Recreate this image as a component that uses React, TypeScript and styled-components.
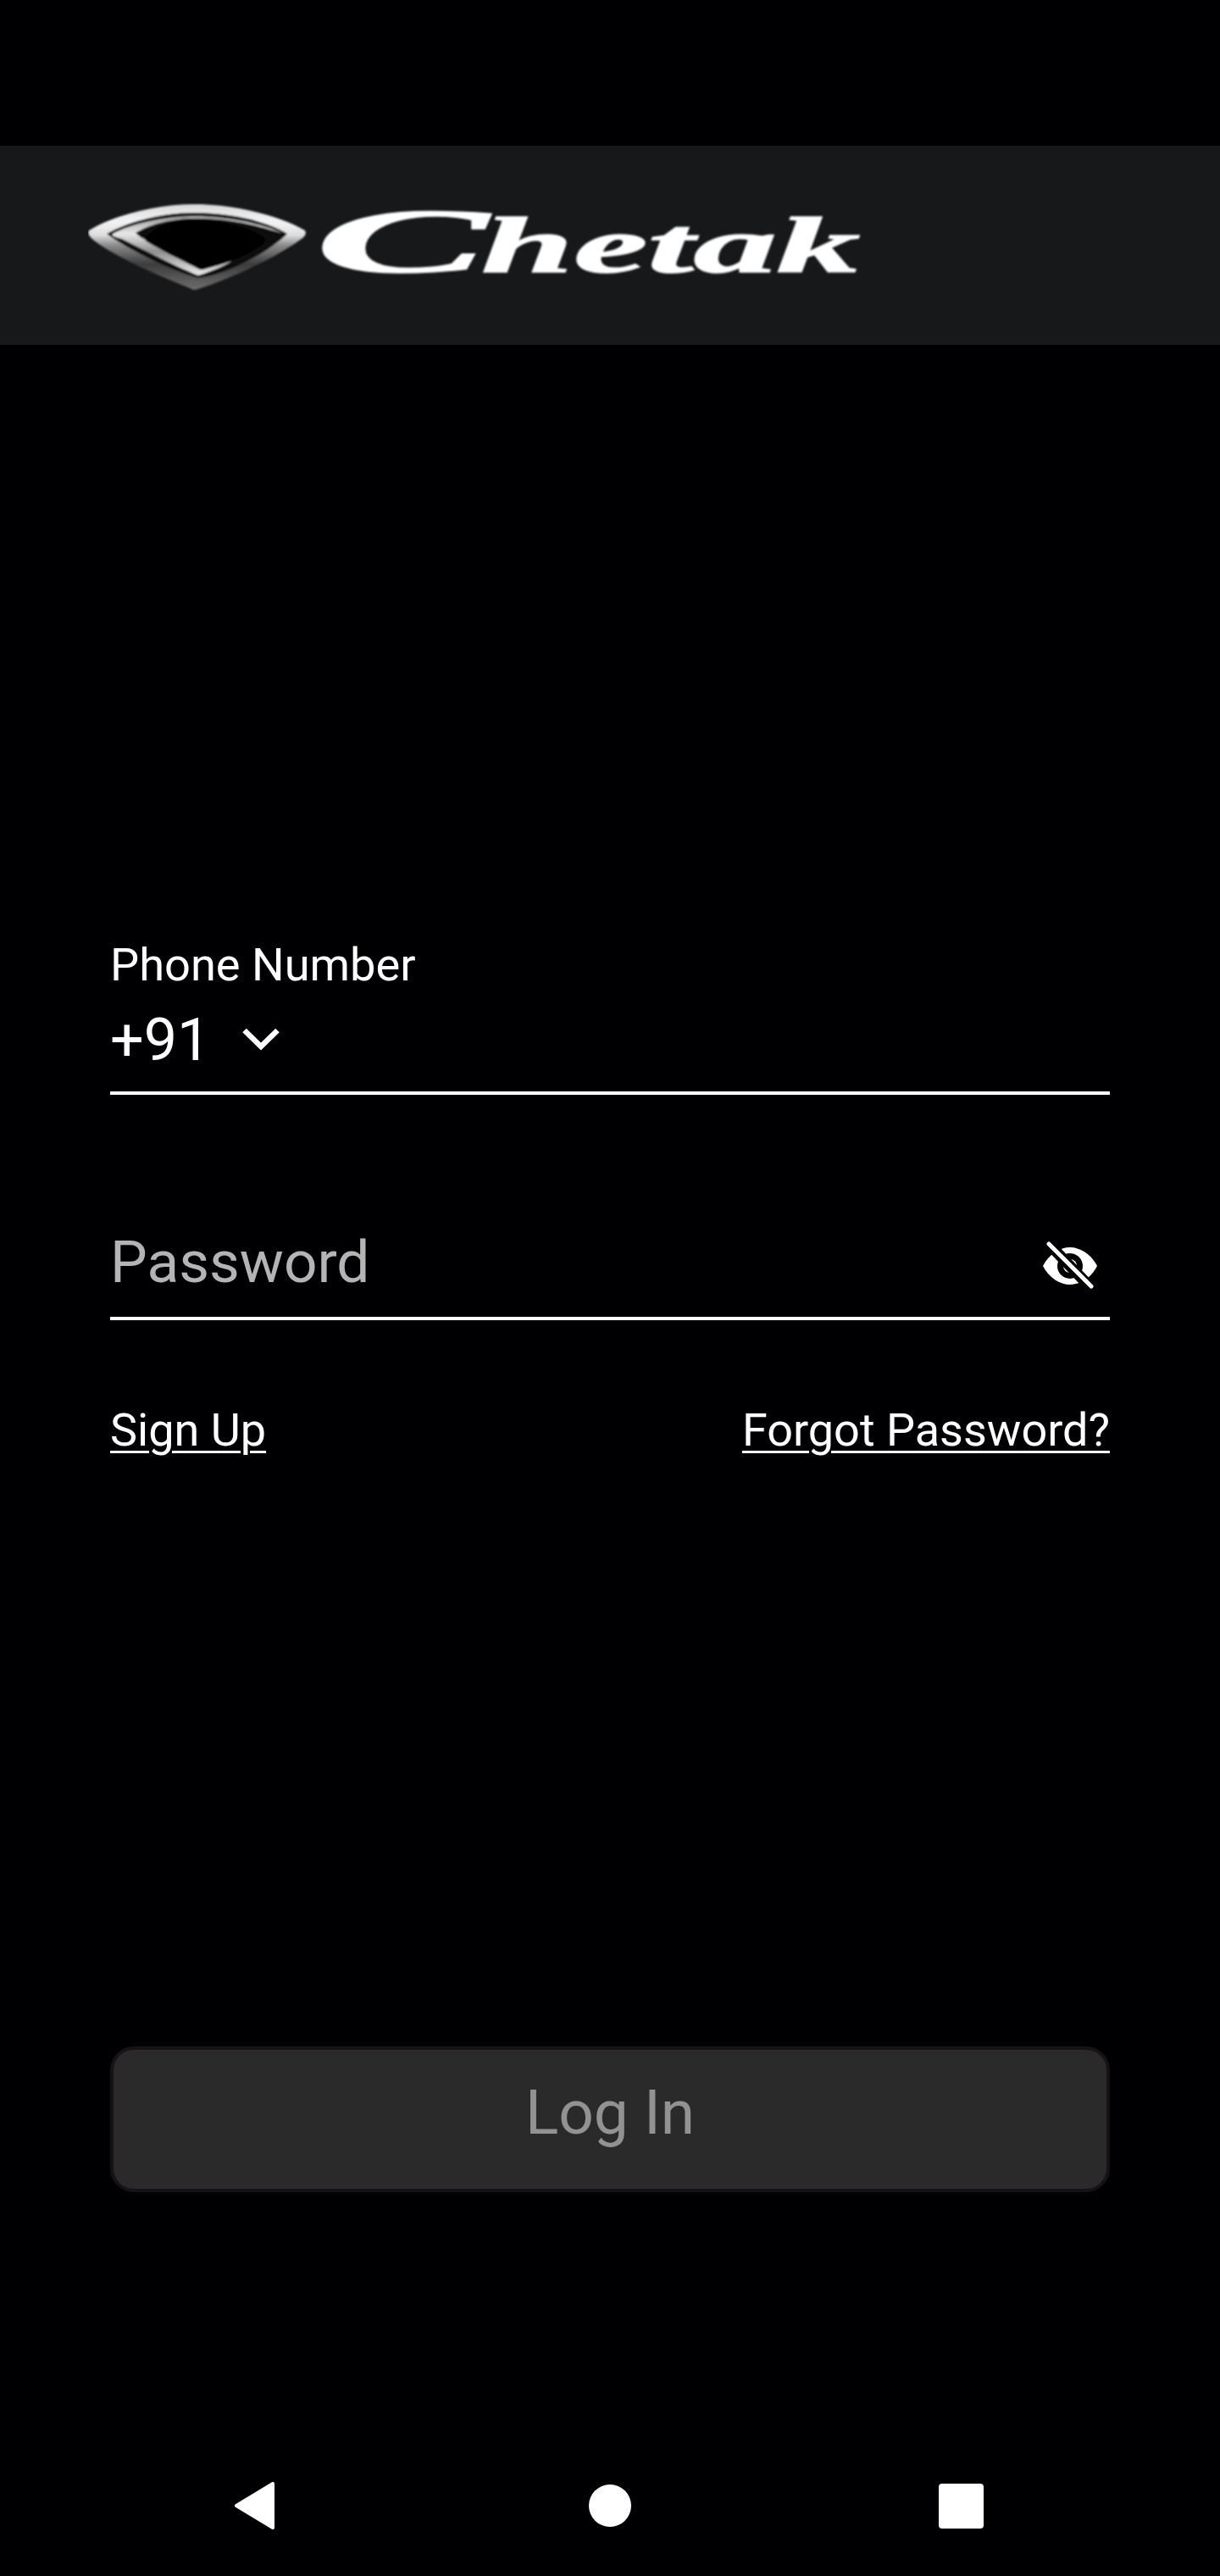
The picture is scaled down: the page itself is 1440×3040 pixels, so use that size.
import React from 'react';
import styled, { createGlobalStyle } from 'styled-components';

const Global = createGlobalStyle`
  html, body { margin: 0; padding: 0; background: #000002; }
  * { box-sizing: border-box; }
`;

const Page = styled.div`
  width: 1440px;
  height: 3040px;
  display: flex;
  flex-direction: column;
  background: #000002;
  color: #fff;
  font-family: Roboto, "Liberation Sans", sans-serif;
  overflow: hidden;
`;

const StatusSpace = styled.div`
  height: 172px;
  flex: none;
`;

const Header = styled.header`
  height: 235px;
  flex: none;
  background: #17181a;
  display: flex;
  align-items: flex-start;
  padding: 48px 0 0 104px;
`;

const Main = styled.main`
  flex: 1;
  display: flex;
  flex-direction: column;
  padding: 0 130px;
`;

const PhoneField = styled.div`
  margin-top: 700px;
  height: 185px;
  border-bottom: 4px solid #fff;
  display: flex;
  flex-direction: column;
`;

const FieldLabel = styled.label`
  font-size: 54.2px;
  line-height: 64px;
  height: 64px;
`;

const PhoneRow = styled.div`
  display: flex;
  align-items: center;
  gap: 38px;
  margin-top: 16px;
`;

const Code = styled.span`
  font-size: 70px;
  line-height: 80px;
`;

const PasswordField = styled.div`
  margin-top: 126px;
  height: 140px;
  border-bottom: 4px solid #fff;
  display: flex;
  align-items: flex-start;
  justify-content: space-between;
  padding: 32px 7px 0 0;
`;

const Placeholder = styled.span`
  font-size: 69.4px;
  line-height: 80px;
  color: #b4b4b4;
`;

const EyeSlot = styled.span`
  display: block;
  margin-top: 13px;
`;

const LinkRow = styled.div`
  margin-top: 98px;
  display: flex;
  justify-content: space-between;
`;

const TextLink = styled.a`
  font-size: 54px;
  line-height: 64px;
  color: #fff;
  text-decoration: underline;
  text-decoration-thickness: 3px;
  text-underline-offset: 6px;
`;

const LoginButton = styled.button`
  margin-top: 695px;
  height: 172px;
  width: 100%;
  background: #2a2a2a;
  border: 4px solid #171215;
  border-radius: 28px;
  color: #929292;
  font-family: inherit;
  font-size: 73px;
  padding: 0 0 16px;
`;

const NavBar = styled.nav`
  height: 172px;
  flex: none;
  display: grid;
  grid-template-columns: 418px 413px 53px;
  align-items: center;
  padding: 60px 0 54px 277px;
`;

const NavIcon = styled.svg`
  display: block;
  flex: none;
`;

const Logo = () => (
  <svg width="920" height="150" viewBox="0 -20 920 150" aria-label="Chetak">
    <defs>
      <linearGradient id="shell" x1="0" y1="0" x2="0" y2="1">
        <stop offset="0" stopColor="#d8d8d8" />
        <stop offset="0.2" stopColor="#f4f4f4" />
        <stop offset="0.36" stopColor="#dedede" />
        <stop offset="0.48" stopColor="#8a8a8a" />
        <stop offset="0.7" stopColor="#3c3c3c" />
        <stop offset="1" stopColor="#6e6e6e" />
      </linearGradient>
      <linearGradient id="inner" x1="0" y1="0" x2="0" y2="1">
        <stop offset="0" stopColor="#9a9a9a" />
        <stop offset="0.3" stopColor="#e8e8e8" />
        <stop offset="0.6" stopColor="#8f8f8f" />
        <stop offset="1" stopColor="#ededed" />
      </linearGradient>
      <filter id="soft" x="-5%" y="-5%" width="110%" height="110%">
        <feGaussianBlur stdDeviation="1.1" />
      </filter>
    </defs>
    <g filter="url(#soft)">
      <path d="M1 32C30 14 80 1 126 1C172 1 225 14 256 32C258 35 256 39 253 41C220 66 160 92 130 101C126 103 123 102 120 100C90 88 32 64 6 43C1 39 -1 35 1 32Z" fill="url(#shell)" />
      <path d="M22 36C50 20 90 11 126 11C165 11 210 20 235 36C215 56 165 84 130 88C100 80 50 56 22 36Z" fill="#0b0b0b" />
      <path d="M29 36C50 24 92 15 126 15C165 15 205 24 229 35C212 31 180 18 126 18C95 18 70 26 56 35L62 40L134 78L170 68C158 75 144 81 130 85C100 73 60 52 40 42C33 40 27 39 29 36Z" fill="url(#inner)" />
      <path d="M68 40C78 28 98 20 126 20C158 20 190 28 208 40C210 44 208 47 204 50C188 62 160 72 136 78C132 79 130 77 126 75C106 65 84 54 69 45C67 43 67 41 68 40Z" fill="#000" />
    </g>
    <g filter="url(#soft)">
      <text
        y="81"
        fontFamily='"Liberation Serif", serif'
        fontStyle="italic"
        fontWeight="700"
        fill="#fff"
        stroke="#fff"
        strokeWidth="1.5"
      >
        <tspan x="268" fontSize="108" textLength="204" lengthAdjust="spacingAndGlyphs">C</tspan>
        <tspan x="464" fontSize="94" textLength="447" lengthAdjust="spacingAndGlyphs">hetak</tspan>
      </text>
    </g>
  </svg>
);

const Chevron = () => (
  <NavIcon width="44" height="28" viewBox="0 0 44 28">
    <path d="M2.5 3 L22 22 L41.5 3" fill="none" stroke="#fff" strokeWidth="6.5" />
  </NavIcon>
);

const EyeOff = () => (
  <NavIcon width="80" height="62" viewBox="0 0 80 62">
    <path d="M8 31C15 17 28 9 40 9C52 9 65 17 72 31C65 45 52 53 40 53C28 53 15 45 8 31Z" fill="#fff" />
    <circle cx="40" cy="31" r="15" fill="#000" />
    <circle cx="40" cy="31" r="8" fill="#fff" />
    <path d="M15 5L65 57" stroke="#000" strokeWidth="13" />
    <path d="M15 5L65 55" stroke="#fff" strokeWidth="5" strokeLinecap="round" />
  </NavIcon>
);

export default function App() {
  return (
    <Page>
      <Global />
      <StatusSpace />
      <Header>
        <Logo />
      </Header>
      <Main>
        <PhoneField>
          <FieldLabel>Phone Number</FieldLabel>
          <PhoneRow>
            <Code>+91</Code>
            <Chevron />
          </PhoneRow>
        </PhoneField>
        <PasswordField>
          <Placeholder>Password</Placeholder>
          <EyeSlot>
            <EyeOff />
          </EyeSlot>
        </PasswordField>
        <LinkRow>
          <TextLink>Sign Up</TextLink>
          <TextLink>Forgot Password?</TextLink>
        </LinkRow>
        <LoginButton disabled>Log In</LoginButton>
      </Main>
      <NavBar>
        <NavIcon width="48" height="58" viewBox="0 0 48 58">
          <path d="M45 3 V55 L2 29 Z" fill="#fff" stroke="#fff" strokeWidth="4" strokeLinejoin="round" />
        </NavIcon>
        <NavIcon width="50" height="50" viewBox="0 0 50 50">
          <circle cx="25" cy="25" r="25" fill="#fff" />
        </NavIcon>
        <NavIcon width="53" height="53" viewBox="0 0 53 53">
          <rect width="53" height="53" rx="4" fill="#fff" />
        </NavIcon>
      </NavBar>
    </Page>
  );
}
